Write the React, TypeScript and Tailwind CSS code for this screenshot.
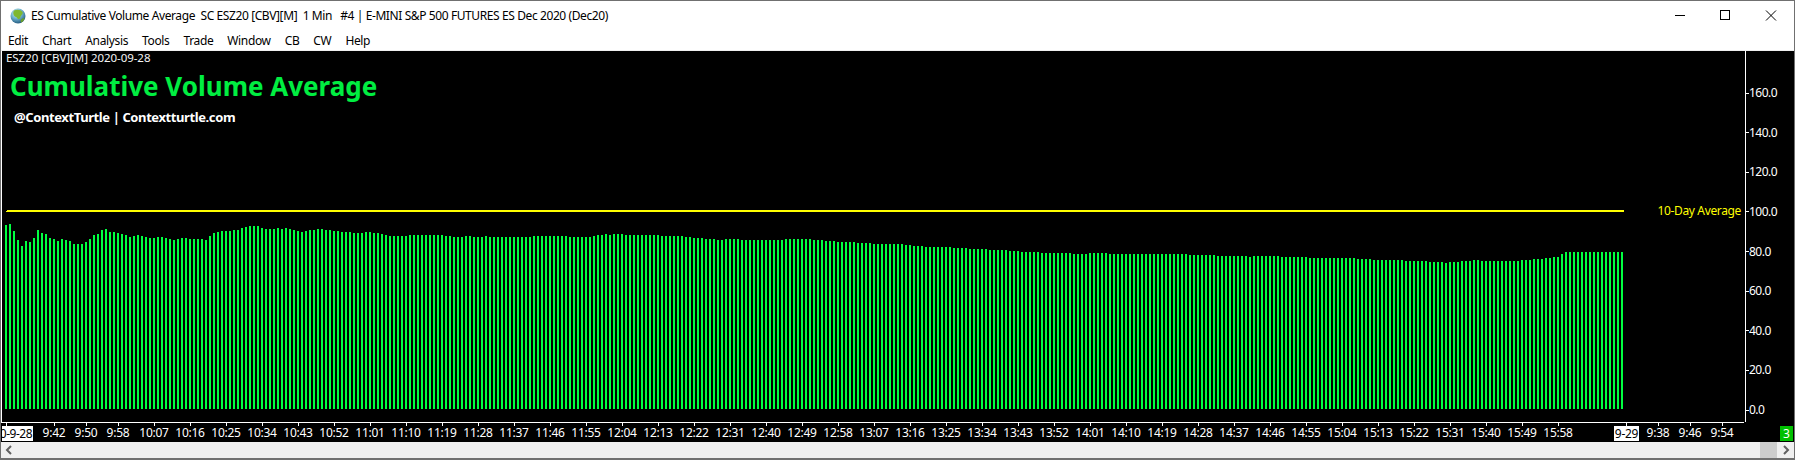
const s1 = [75,72,93,120,138,123,126,114,90,99,102,114,117,123,117,120,123,132,132,132,126,117,105,102,90,87,96,96,99,102,105,111,108,105,108,111,114,114,111,111,114,117,120,117,114,114,117,117,117,117,120,108,99,96,93,93,93,90,90,84,81,78,78,78,84,87,87,87,84,87,84,87,90].map((v) => 200 + v / 3);
const s2 = [27,30,27,24,24,21,21,24,24,27,27,30,30,30,33,33,33,30,30,33,33,36,39,42,42,42,42,42,39,39,39,39,39,39,39,39,39,42,42,45,45,45,42,42,45,45,45,42,45,45,45,45,45,45,45,45,45,45,45,42,42,42,42,42,42,42,42,42,45,45,45,45,45,45,42,39,39,36,39,36,36,36,39,39,39].map((v) => 222 + v / 3);
const s3 = [15,15,15,15,15,15,18,18,18,18,18,18,21,21,24,24,24,27,27,27,30,30,27,27,27,27,30,30,30,30,30,30,30,30,30,30,30,27,27,27,27,27,27,27,30,30,30,33,33,33,36,36,36,36,36,39,39,39,39,42,42,42,42,42,42,42,42,45,45,48,48,48,51,51,51,51,51,51,51,54,54,54,54,57,57].map((v) => 230 + v / 3);
const s4 = [27,27,27,30,30,30,30,30,33,33,33,36,36,36,36,36,39,39,39,39,39,39,39,39,42,42,42,42,39,39,39,39,39,42,42,42,42,42,42,42,42,42,42,42,42,42,42,42,42,42,42,42,42,45,45,45,45,45,45,45,48,48,48,48,48,48,48,48,51,48,48,48,48,48,48,48,51,51,51,51,51,51,51,54,54].map((v) => 240 + v / 3);
const s5 = [54,54,54,54,54,54,54,54,54,54,57,57,57,57,60,60,60,60,60,60,60,60,63,63,63,63,63,63,66,66,66,66,69,66,66,66,63,63,63,60,60,63,63,63,63,63,63,63,63,63,63,60,60,60,57,57,57,54,54,51,51,42,36,36,36,36,36,36,36,36,36,36,36,36,36,36,36].map((v) => 240 + v / 3);
const tops = [...s1, ...s2, ...s3, ...s4, ...s5];

const CHART_TOP = 51;
const BOTTOM = 409;

const yLabels = ["160.0", "140.0", "120.0", "100.0", "80.0", "60.0", "40.0", "20.0", "0.0"];
const menus = ["Edit", "Chart", "Analysis", "Tools", "Trade", "Window", "CB", "CW", "Help"];

const xTimes = (() => {
  const out: { x: number; t: string }[] = [
    { x: 54, t: "9:42" },
    { x: 86, t: "9:50" },
    { x: 118, t: "9:58" },
  ];
  for (let i = 0; i < 40; i++) {
    const m = 10 * 60 + 7 + i * 9;
    out.push({ x: 154 + i * 36, t: `${Math.floor(m / 60)}:${String(m % 60).padStart(2, "0")}` });
  }
  out.push({ x: 1658, t: "9:38" }, { x: 1690, t: "9:46" }, { x: 1722, t: "9:54" });
  return out;
})();

function Globe() {
  return (
    <svg width="16" height="16" viewBox="0 0 16 16" className="shrink-0">
      <defs>
        <radialGradient id="g" cx="0.4" cy="0.3" r="0.8">
          <stop offset="0" stopColor="#e8f6fa" />
          <stop offset="0.45" stopColor="#6fb4d0" />
          <stop offset="1" stopColor="#14466e" />
        </radialGradient>
      </defs>
      <circle cx="8" cy="8" r="7.5" fill="url(#g)" />
      <path d="M4 2.5 C7 1 11 1.5 12.5 4 C13.5 6 11 7 10.5 9 C10 11 8.5 12 7.5 10.5 C7 9 5 9 4 7.5 C3 6 3 4 4 2.5Z" fill="#7fb82f" />
      <path d="M11 11.5 C12 10.5 14 10 14.5 10.5 C14 12.5 12.5 14 11 14.5 C10.5 13.5 10.5 12.5 11 11.5Z" fill="#6a9f2a" />
    </svg>
  );
}

export default function App() {
  return (
    <div
      className="flex h-[460px] w-[1795px] flex-col overflow-hidden border-x border-t border-b-2 border-[#707070] bg-white text-[12px] text-black"
      style={{ fontFamily: '"Noto Sans", sans-serif' }}
    >
      <div className="flex h-[29px] shrink-0 items-center pl-[9px]">
        <Globe />
        <span className="ml-[5px] whitespace-pre tracking-[-0.4px]">
          ES Cumulative Volume Average  SC ESZ20 [CBV][M]  1 Min   #4 | E-MINI S&amp;P 500 FUTURES ES Dec 2020 (Dec20)
        </span>
        <div className="ml-auto flex h-full items-center">
          <svg width="46" height="29" viewBox="0 0 46 29"><path d="M19 14.5H29" stroke="#000" /></svg>
          <svg width="46" height="29" viewBox="0 0 46 29"><rect x="18.5" y="9.5" width="9" height="9" fill="none" stroke="#000" /></svg>
          <svg width="46" height="29" viewBox="0 0 46 29"><path d="M18 9.5L28 19.5M28 9.5L18 19.5" stroke="#000" /></svg>
        </div>
      </div>

      <div className="flex h-[20px] shrink-0 items-center gap-[14px] pl-[7px] pt-[2px]">
        {menus.map((m) => (
          <span key={m} className="tracking-[-0.36px]">{m}</span>
        ))}
      </div>
      <div className="h-px shrink-0 bg-[#f0f0f0]" />

      <div className="flex min-h-0 flex-1 flex-col bg-black text-white">
        <div className="flex min-h-0 flex-1">
          <div className="relative min-w-0 flex-1 border-l border-white pl-[4px]">
            <svg
              className="absolute left-0 top-0"
              width="1742"
              height="371"
              viewBox={`2 ${CHART_TOP} 1742 371`}
            >
              {tops.map((y, i) => (
                <rect key={i} x={5 + i * 4} y={y} width="2" height={BOTTOM - y} fill="#00ff41" />
              ))}
              <rect x="7" y="210" width="1617" height="2" fill="#ffff00" />
              <rect x="6" y="211" width="1" height="1" fill="#ffff00" />
            </svg>
            <div className="relative flex flex-col">
              <span className="h-[14px] text-[11.5px] leading-[14px] tracking-[-0.05px] text-[#f4f4f4]">ESZ20 [CBV][M] 2020-09-28</span>
              <span className="ml-[4px] mt-[4px] h-[34px] text-[26px] font-bold leading-[34px] text-[#00ee41]">Cumulative Volume Average</span>
              <span className="ml-[8px] mt-[5px] h-[18px] text-[13px] font-bold leading-[18px] tracking-[-0.4px]">@ContextTurtle | Contextturtle.com</span>
            </div>
            <span className="absolute right-[4px] top-[151px] text-[12px] leading-[18px] text-[#ffff00] tracking-[-0.35px]">10-Day Average</span>
          </div>
          <div className="flex w-[49px] shrink-0 flex-col justify-between border-l border-white pt-[33px] pb-[3px]">
            {yLabels.map((l) => (
              <div key={l} className="flex h-[18px] items-center">
                <span className="h-px w-[3px] bg-white" />
                <span className="text-[12px] leading-[18px] tracking-[-0.5px]">{l}</span>
              </div>
            ))}
          </div>
        </div>
        <div className="relative h-[20px] shrink-0">
          <div className="h-px w-[1743px] bg-white" />
          {xTimes.map((l) => (
            <span key={l.x} className="absolute top-[1px] h-[3px] w-px bg-white" style={{ left: l.x - 1 }} />
          ))}
          <span className="absolute left-[5px] top-[1px] h-[3px] w-px bg-white" />
          <span className="absolute left-[1625px] top-[1px] h-[3px] w-px bg-white" />
          {xTimes.map((l) => (
            <span key={l.t + l.x} className="absolute top-[2px] -translate-x-1/2 text-[12px] leading-[18px] tracking-[-0.25px]" style={{ left: l.x - 1 }}>
              {l.t}
            </span>
          ))}
          <span className="absolute left-[1px] top-[4px] flex h-[15px] w-[31px] items-center justify-end overflow-hidden whitespace-nowrap bg-white pr-[1px] text-[12px] tracking-[-0.5px] text-black">0-9-28</span>
          <span className="absolute left-[1613px] top-[4px] flex h-[15px] w-[25px] items-center justify-center bg-white text-[12px] tracking-[-0.25px] text-black">9-29</span>
          <span className="absolute left-[1779px] top-[4px] flex h-[15px] w-[13px] items-center justify-center bg-[#00c000] text-[12px] text-white">3</span>
        </div>
      </div>

      <div className="flex h-[16px] shrink-0 items-center bg-[#f0f0f0] pl-[4px] pr-[4px]">
        <svg width="8" height="10" viewBox="0 0 8 10"><path d="M6 1L2 5L6 9" fill="none" stroke="#606060" strokeWidth="2" /></svg>
        <div className="ml-auto h-full w-[17px] bg-[#cdcdcd]" />
        <svg className="ml-[5px]" width="8" height="10" viewBox="0 0 8 10"><path d="M2 1L6 5L2 9" fill="none" stroke="#606060" strokeWidth="2" /></svg>
      </div>
    </div>
  );
}
